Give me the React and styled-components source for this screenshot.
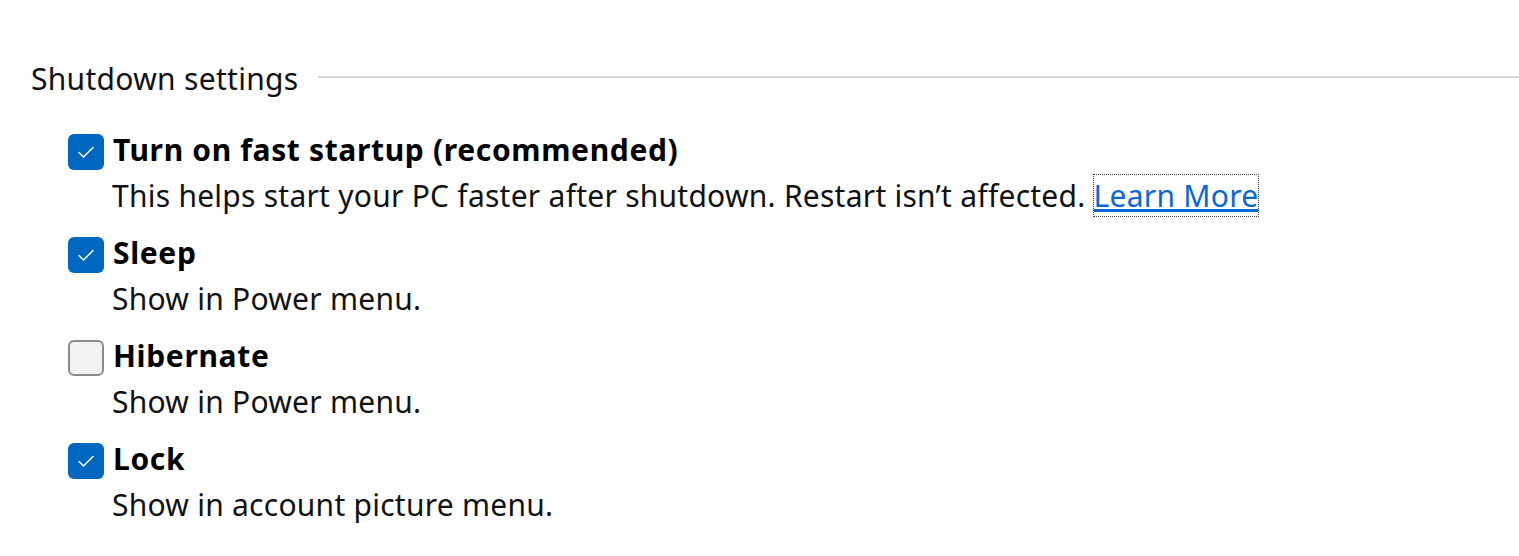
import React from 'react'
import styled, { createGlobalStyle } from 'styled-components'

const GlobalStyle = createGlobalStyle`
    body {
        margin: 0;
        background: #ffffff;
        font-family: "Segoe UI", "Noto Sans", "Open Sans", sans-serif;
        color: #000000;
    }
`

const Page = styled.div`
    width: 1519px;
    height: 556px;
    padding: 56px 0 0 31px;
    box-sizing: border-box;
    overflow: hidden;
`

const GroupHeader = styled.div`
    display: flex;
    align-items: center;
    gap: 20px;
    height: 44px;

    h2 {
        margin: 0;
        font-size: 30px;
        font-weight: 400;
        letter-spacing: 0.3px;
        white-space: nowrap;
        color: #111111;
    }
`

const Rule = styled.div`
    flex: 1;
    height: 2px;
    margin-top: -3px;
    background: #d6d6d6;
`

const List = styled.div`
    display: flex;
    flex-direction: column;
    gap: 15px;
    padding: 30px 0 0 37px;
`

const Item = styled.div`
    display: flex;
    flex-direction: column;
`

const TitleRow = styled.label`
    display: flex;
    align-items: center;
    gap: 9px;
    height: 44px;
    font-size: 30px;
    font-weight: 700;
    letter-spacing: 0.65px;
`

const TitleText = styled.span`
    margin-bottom: 5px;
    white-space: nowrap;
`

const Box = styled.span`
    width: 36px;
    height: 36px;
    box-sizing: border-box;
    border-radius: 6px;
    display: flex;
    align-items: center;
    justify-content: center;
    flex-shrink: 0;
    background: ${p => (p.$checked ? '#0067c0' : '#f3f3f3')};
    border: ${p => (p.$checked ? 'none' : '2px solid #8a8a8a')};
`

const Description = styled.div`
    padding-left: 44px;
    height: 44px;
    line-height: 44px;
    font-size: 30px;
    letter-spacing: 0.25px;
    color: #111111;
    white-space: nowrap;
`

const Link = styled.a`
    color: #0a67d6;
    text-decoration: underline;
    outline: 1px dotted #444;
    outline-offset: 0;
    cursor: pointer;
`

const Check = () => (
    <svg width="18" height="14" viewBox="0 0 18 14">
        <path d="M2 7.5 L6.5 12 L16 2.5" fill="none" stroke="#ffffff" strokeWidth="1.5" strokeLinecap="round" strokeLinejoin="round" />
    </svg>
)

const options = [
    { title: 'Turn on fast startup (recommended)', text: 'This helps start your PC faster after shutdown. Restart isn\u2019t affected.', link: true, checked: true },
    { title: 'Sleep', text: 'Show in Power menu.', checked: true },
    { title: 'Hibernate', text: 'Show in Power menu.', checked: false },
    { title: 'Lock', text: 'Show in account picture menu.', checked: true },
]

const App = () => {
    return (
        <Page>
            <GlobalStyle />
            <GroupHeader>
                <h2>Shutdown settings</h2>
                <Rule />
            </GroupHeader>
            <List>
                {options.map(o => (
                    <Item key={o.title}>
                        <TitleRow>
                            <Box $checked={o.checked}>{o.checked && <Check />}</Box>
                            <TitleText>{o.title}</TitleText>
                        </TitleRow>
                        <Description>
                            {o.text}
                            {o.link && <> <Link>Learn More</Link></>}
                        </Description>
                    </Item>
                ))}
            </List>
        </Page>
    )
}

export default App
